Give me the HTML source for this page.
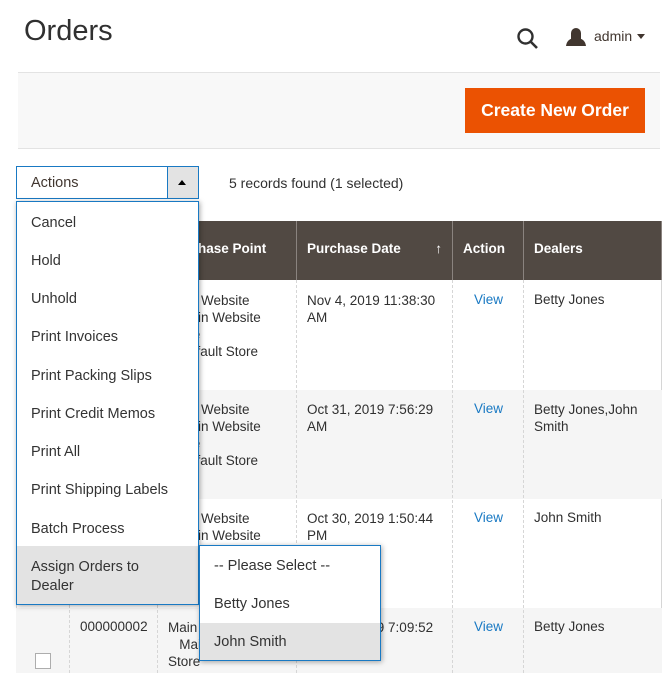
<!DOCTYPE html><html><head><style>
*{margin:0;padding:0;box-sizing:border-box}
html,body{width:672px;height:673px;overflow:hidden}
body{background:#fff;font-family:"Liberation Sans",sans-serif;color:#303030;position:relative;font-size:13.5px}
.a{position:absolute;white-space:nowrap}
.th{position:absolute;top:221px;height:59px;background:#514943;color:#fff;font-weight:bold;font-size:13.5px;line-height:55px;padding-left:10px;border-left:1px solid #8a837f}
.vl{position:absolute;top:280px;height:393px;border-left:1px dashed #d6d6d6}
.lk{color:#1979c3}
.dd{position:absolute;background:#fff;border:1px solid #1979c3;box-shadow:1px 1px 5px rgba(0,0,0,.35)}
.it{position:absolute;left:14px;font-size:14.5px;color:#333}
</style></head><body>
<div class="a" style="left:24px;top:15px;font-size:29px;color:#303030">Orders</div>
<svg class="a" style="left:516px;top:27px" width="24" height="24" viewBox="0 0 24 24"><circle cx="9.5" cy="9.5" r="7" fill="none" stroke="#303030" stroke-width="2.4"/><line x1="14.5" y1="14.5" x2="21" y2="21" stroke="#303030" stroke-width="2.6"/></svg>
<svg class="a" style="left:566px;top:27px" width="20" height="19" viewBox="0 0 20 19"><circle cx="10" cy="6" r="5" fill="#41362f"/><path d="M0 19 Q1 11 10 11 Q19 11 20 19Z" fill="#41362f"/><rect x="5" y="6" width="10" height="6" fill="#41362f"/></svg>
<div class="a" style="left:594px;top:28px;font-size:14px;color:#41362f">admin</div>
<div class="a" style="left:637px;top:34px;width:0;height:0;border-left:4px solid transparent;border-right:4px solid transparent;border-top:5px solid #41362f"></div>
<div class="a" style="left:18px;top:72px;width:642px;height:77px;background:#f8f8f8;border-top:1px solid #e3e3e3;border-bottom:1px solid #e3e3e3"></div>
<div class="a" style="left:465px;top:88px;width:180px;height:45px;background:#eb5202;color:#fff;font-size:17.5px;font-weight:bold;line-height:44px;text-align:center">Create New Order</div>
<div class="a" style="left:229px;top:175px;font-size:14px;color:#303030">5 records found (1 selected)</div>
<div class="a" style="left:16px;top:221px;width:646px;height:452px;border:1px solid #d6d6d6;border-top:none"></div>
<div class="a" style="left:16px;top:390px;width:646px;height:109px;background:#f5f5f5"></div>
<div class="a" style="left:16px;top:608px;width:646px;height:65px;background:#f5f5f5"></div>
<div class="th" style="left:16px;width:53px;border-left:none"></div>
<div class="th" style="left:69px;width:88px"></div>
<div class="th" style="left:157px;width:139px">Purchase Point</div>
<div class="th" style="left:296px;width:156px">Purchase Date<span style="position:absolute;right:10px;font-weight:normal">↑</span></div>
<div class="th" style="left:452px;width:71px">Action</div>
<div class="th" style="left:523px;width:139px;border-right:1px solid #8a837f">Dealers</div>
<div class="vl" style="left:69px"></div><div class="vl" style="left:157px"></div><div class="vl" style="left:296px"></div><div class="vl" style="left:452px"></div><div class="vl" style="left:523px"></div>
<div class="a" style="left:168px;top:292px;line-height:17px">Main Website<br>&nbsp;&nbsp;&nbsp;Main Website<br>Store<br>&nbsp;&nbsp;&nbsp;Default Store</div>
<div class="a" style="left:168px;top:401px;line-height:17px">Main Website<br>&nbsp;&nbsp;&nbsp;Main Website<br>Store<br>&nbsp;&nbsp;&nbsp;Default Store</div>
<div class="a" style="left:168px;top:510px;line-height:17px">Main Website<br>&nbsp;&nbsp;&nbsp;Main Website<br>Store<br>&nbsp;&nbsp;&nbsp;Default Store</div>
<div class="a" style="left:168px;top:619px;line-height:17px">Main Website<br>&nbsp;&nbsp;&nbsp;Main Website<br>Store<br>&nbsp;&nbsp;&nbsp;Default Store</div>
<div class="a" style="left:307px;top:292px;line-height:17px">Nov 4, 2019 11:38:30<br>AM</div>
<div class="a" style="left:307px;top:401px;line-height:17px">Oct 31, 2019 7:56:29<br>AM</div>
<div class="a" style="left:307px;top:510px;line-height:17px">Oct 30, 2019 1:50:44<br>PM</div>
<div class="a" style="left:307px;top:619px;line-height:17px">Oct 29, 2019 7:09:52</div>
<div class="a lk" style="left:474px;top:292px">View</div>
<div class="a lk" style="left:474px;top:401px">View</div>
<div class="a lk" style="left:474px;top:510px">View</div>
<div class="a lk" style="left:474px;top:619px">View</div>
<div class="a" style="left:534px;top:292px">Betty Jones</div>
<div class="a" style="left:534px;top:401px;line-height:17px">Betty Jones,John<br>Smith</div>
<div class="a" style="left:534px;top:510px">John Smith</div>
<div class="a" style="left:534px;top:619px">Betty Jones</div>
<div class="a" style="left:80px;top:619px">000000002</div>
<div class="a" style="left:35px;top:653px;width:16px;height:16px;border:1px solid #adadad;background:#fff"></div>
<div class="a" style="left:16px;top:166px;width:183px;height:33px;border:1px solid #1979c3;background:#fff"></div>
<div class="a" style="left:31px;top:175px;font-size:14.5px;color:#41362f">Actions</div>
<div class="a" style="left:167px;top:167px;width:31px;height:31px;background:#e3e3e3;border-left:1px solid #1979c3"></div>
<div class="a" style="left:178px;top:180px;width:0;height:0;border-left:4px solid transparent;border-right:4px solid transparent;border-bottom:5px solid #000"></div>
<div class="dd" style="left:16px;top:201px;width:183px;height:404px">
<div class="a" style="left:0;top:344px;width:181px;height:58px;background:#e3e3e3"></div>
<div class="it" style="top:13px">Cancel</div>
<div class="it" style="top:51px">Hold</div>
<div class="it" style="top:89px">Unhold</div>
<div class="it" style="top:127px">Print Invoices</div>
<div class="it" style="top:166px">Print Packing Slips</div>
<div class="it" style="top:204px">Print Credit Memos</div>
<div class="it" style="top:242px">Print All</div>
<div class="it" style="top:280px">Print Shipping Labels</div>
<div class="it" style="top:319px">Batch Process</div>
<div class="it" style="top:356px;line-height:19px">Assign Orders to<br>Dealer</div>
</div>
<div class="dd" style="left:199px;top:545px;width:182px;height:116px">
<div class="a" style="left:0;top:77px;width:180px;height:37px;background:#e3e3e3"></div>
<div class="it" style="top:12px">-- Please Select --</div>
<div class="it" style="top:50px">Betty Jones</div>
<div class="it" style="top:88px">John Smith</div>
</div>
</body></html>
